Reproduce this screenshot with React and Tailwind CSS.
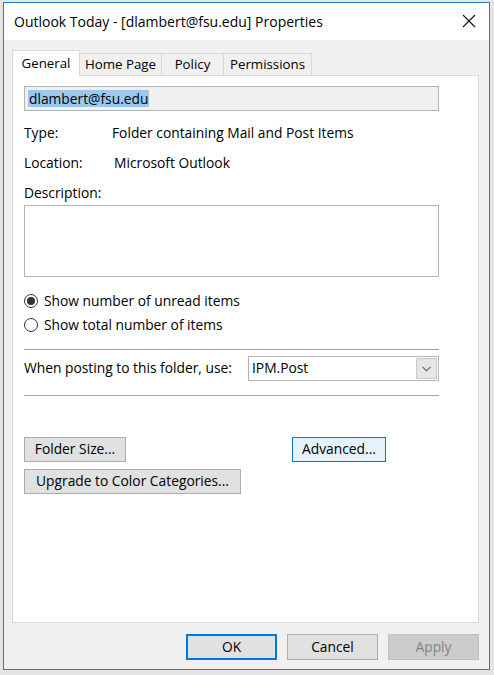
import React from "react";

const font = { fontFamily: '"Open Sans", "Noto Sans", sans-serif' };

function Tab({ label, active, w }) {
  if (active) {
    return (
      <div
        className="relative z-10 mb-[-1px] flex h-[26px] items-start justify-center border border-b-0 border-[#d9d9d9] bg-white pt-[3px] text-[13.3px] text-black"
        style={{ width: w }}
      >
        {label}
      </div>
    );
  }
  return (
    <div
      className="flex h-[22px] items-center justify-center border border-b-0 border-l-0 border-[#d9d9d9] bg-[#f0f0f0] pt-[1px] text-[13.3px] text-black"
      style={{ width: w }}
    >
      {label}
    </div>
  );
}

function Radio({ checked, label }) {
  return (
    <div className="flex h-[24px] items-center gap-[6px]">
      <div className="flex h-[14px] w-[14px] items-center justify-center rounded-full border border-[#333333] bg-white">
        {checked && <div className="h-[8px] w-[8px] rounded-full bg-[#333333]" />}
      </div>
      <span className="text-[13.8px] text-black">{label}</span>
    </div>
  );
}

function Btn({ children, className = "" }) {
  return (
    <div
      className={
        "flex h-[25px] items-center justify-center border border-[#adadad] bg-[#e1e1e1] text-[13.8px] text-black " +
        className
      }
    >
      {children}
    </div>
  );
}

export default function App() {
  return (
    <div className="h-[675px] w-[494px] overflow-hidden bg-[#e4e4e4] pl-[3px] pt-[2px]" style={font}>
      <div className="flex h-[668px] w-[487px] flex-col border border-[#2a7ad0] bg-[#f0f0f0]">
        {/* Title bar */}
        <div className="flex h-[37px] shrink-0 items-center justify-between bg-white pl-[10px] pr-[13px]">
          <span className="text-[14px] text-black">Outlook Today - [dlambert@fsu.edu] Properties</span>
          <svg width="14" height="14" viewBox="0 0 14 14" className="mb-[1px]">
            <path d="M1 1 L13 13 M13 1 L1 13" stroke="#111" strokeWidth="1.1" />
          </svg>
        </div>

        {/* Body */}
        <div className="flex flex-1 flex-col pl-[8px] pr-[10px] pt-[10px]">
          {/* Tabs */}
          <div className="flex items-end">
            <Tab label="General" active w={68} />
            <Tab label="Home Page" w={82} />
            <Tab label="Policy" w={62} />
            <Tab label="Permissions" w={88} />
          </div>

          {/* Panel */}
          <div className="flex h-[548px] flex-col border border-[#d9d9d9] bg-white pl-[11px] pr-[39px] pt-[10px]">
            {/* Name field */}
            <div className="flex h-[25px] items-center border border-[#b4b4b4] bg-[#f0f0f0] pl-[3px]">
              <span className="bg-[#99c9ef] px-[1px] text-[13.8px] leading-[17px] text-black">dlambert@fsu.edu</span>
            </div>

            <div className="mt-[12px] flex h-[20px] items-center text-[13.8px] text-black">
              <span className="w-[88px]">Type:</span>
              <span>Folder containing Mail and Post Items</span>
            </div>
            <div className="mt-[10px] flex h-[20px] items-center text-[13.8px] text-black">
              <span className="w-[90px]">Location:</span>
              <span>Microsoft Outlook</span>
            </div>
            <div className="mt-[10px] flex h-[20px] items-center text-[13.8px] text-black">Description:</div>
            <div className="mt-[2px] h-[72px] border border-[#b4b4b4] bg-white" />

            <div className="mt-[12px] flex flex-col">
              <Radio checked label="Show number of unread items" />
              <Radio label="Show total number of items" />
            </div>

            <div className="mt-[12px] h-px bg-[#a0a0a0]" />

            <div className="mt-[6px] flex items-center">
              <span className="w-[224px] text-[13.8px] text-black">When posting to this folder, use:</span>
              <div className="flex h-[25px] flex-1 items-center justify-between border border-[#b4b4b4] bg-white pl-[3px] pr-[1px]">
                <span className="text-[13.8px] text-black">IPM.Post</span>
                <div className="flex h-[21px] w-[21px] items-center justify-center border border-[#c8c8c8] bg-[#e6e6e6]">
                  <svg width="9" height="6" viewBox="0 0 9 6">
                    <path d="M0.5 0.8 L4.5 4.8 L8.5 0.8" fill="none" stroke="#606060" strokeWidth="1.1" />
                  </svg>
                </div>
              </div>
            </div>

            <div className="mt-[14px] h-px bg-[#a0a0a0]" />

            <div className="mt-[41px] flex items-start">
              <Btn className="w-[102px]">Folder Size...</Btn>
              <div className="ml-[166px] flex h-[25px] w-[94px] items-center justify-center border border-[#0078d7] bg-[#e5f1fb] text-[13.8px] text-black">
                Advanced...
              </div>
            </div>
            <div className="mt-[7px] flex">
              <Btn className="w-[217px]">Upgrade to Color Categories...</Btn>
            </div>
          </div>

          {/* Bottom buttons */}
          <div className="mt-[11px] flex justify-end gap-[10px]">
            <div className="flex h-[26px] w-[91px] items-center justify-center border-2 border-[#0078d7] bg-[#e1e1e1] text-[13.8px] text-black">
              OK
            </div>
            <Btn className="h-[26px] w-[91px]">Cancel</Btn>
            <div className="flex h-[26px] w-[91px] items-center justify-center border border-[#bfbfbf] bg-[#cccccc] text-[13.8px] text-[#838383]">
              Apply
            </div>
          </div>
        </div>
      </div>
    </div>
  );
}
